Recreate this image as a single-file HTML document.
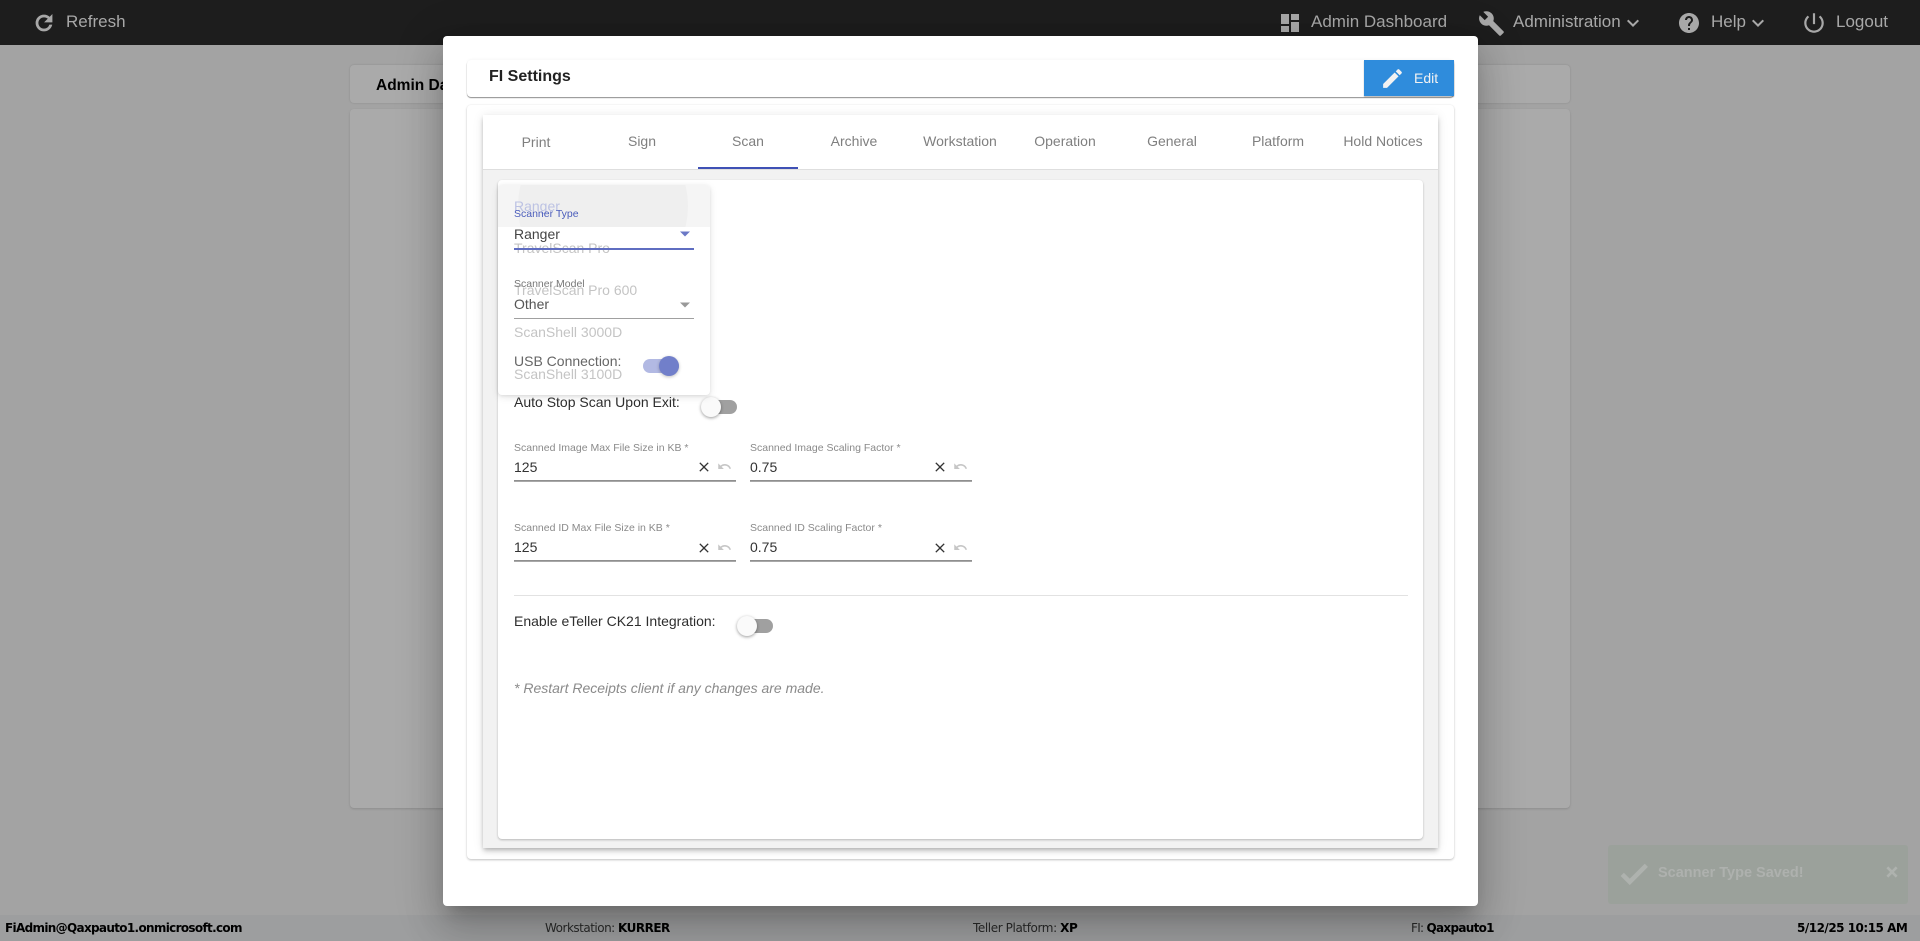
<!DOCTYPE html>
<html><head><meta charset="utf-8"><title>FI Settings</title>
<style>
html,body{margin:0;padding:0;width:1920px;height:941px;overflow:hidden;background:#a3a3a3;font-family:"Liberation Sans",Arial,sans-serif}
.a{position:absolute}
.t{position:absolute;white-space:nowrap;line-height:20px;height:20px}
svg{position:absolute;display:block}
.tab{position:absolute;top:131px;width:106px;text-align:center;font-size:14px;line-height:20px;color:#7f7f7f;white-space:nowrap}
.lbl{font-size:10.5px;color:#8a8a8a}
.val{font-size:14px;color:#333}
.ghost{font-size:14px;color:#c4c4c4}
.ul{position:absolute;height:1px;background:#8f8f8f;border-top:1px solid #8f8f8f;height:0;border-bottom:1px solid #a8a8a8}
.ft{position:absolute;top:918px;font-size:12px;line-height:20px;color:#2a2a2a;white-space:nowrap;font-family:"DejaVu Sans","Liberation Sans",sans-serif}
.ft b{color:#000}
.nav{font-size:17px;color:#a8a8a8}
</style></head><body>

<!-- page behind -->
<div class="a" style="left:0;top:0;width:1920px;height:45px;background:#1d1d1d"></div>
<svg style="left:32px;top:11px" width="24" height="24" viewBox="0 0 24 24" fill="#a8a8a8" stroke="#a8a8a8" stroke-width=".8"><path d="M17.65 6.35C16.2 4.9 14.21 4 12 4c-4.42 0-7.99 3.58-7.99 8s3.57 8 7.99 8c3.73 0 6.84-2.55 7.73-6h-2.08c-.82 2.33-3.04 4-5.65 4-3.31 0-6-2.69-6-6s2.69-6 6-6c1.66 0 3.14.69 4.22 1.78L13 11h7V4l-2.35 2.35z"/></svg>
<div class="t nav" style="left:66px;top:12px">Refresh</div>

<svg style="left:1278px;top:11px" width="24" height="24" viewBox="0 0 24 24" fill="#a8a8a8"><path d="M3 13h8V3H3v10zm0 8h8v-6H3v6zm10 0h8V11h-8v10zm0-18v6h8V3h-8z"/></svg>
<div class="t nav" style="left:1311px;top:12px">Admin Dashboard</div>
<svg style="left:1478px;top:10px" width="27" height="27" viewBox="0 0 24 24" fill="#a8a8a8"><path d="M22.7 19l-9.1-9.1c.9-2.3.4-5-1.5-6.9-2-2-5-2.4-7.4-1.3L9 6 6 9 1.6 4.7C.4 7.1.9 10.1 2.9 12.1c1.9 1.9 4.6 2.4 6.9 1.5l9.1 9.1c.4.4 1 .4 1.4 0l2.3-2.3c.5-.4.5-1.1.1-1.4z"/></svg>
<div class="t nav" style="left:1513px;top:12px">Administration</div>
<svg style="left:1621px;top:11px" width="24" height="24" viewBox="0 0 24 24" fill="#a8a8a8"><path d="M7.41 8.59L12 13.17l4.59-4.58L18 10l-6 6-6-6 1.41-1.41z"/></svg>
<svg style="left:1677px;top:11px" width="24" height="24" viewBox="0 0 24 24" fill="#a8a8a8"><path d="M12 2C6.48 2 2 6.48 2 12s4.48 10 10 10 10-4.48 10-10S17.52 2 12 2zm1 17h-2v-2h2v2zm2.07-7.75l-.9.92C13.45 12.9 13 13.5 13 15h-2v-.5c0-1.1.45-2.1 1.17-2.83l1.24-1.26c.37-.36.59-.86.59-1.41 0-1.1-.9-2-2-2s-2 .9-2 2H8c0-2.21 1.79-4 4-4s4 1.79 4 4c0 .88-.36 1.68-.93 2.25z"/></svg>
<div class="t nav" style="left:1711px;top:12px">Help</div>
<svg style="left:1746px;top:11px" width="24" height="24" viewBox="0 0 24 24" fill="#a8a8a8"><path d="M7.41 8.59L12 13.17l4.59-4.58L18 10l-6 6-6-6 1.41-1.41z"/></svg>
<svg style="left:1801px;top:10px" width="26" height="26" viewBox="0 0 24 24" fill="#a8a8a8"><path d="M13 3h-2v10h2V3zm4.83 2.17l-1.42 1.42C17.99 7.86 19 9.81 19 12c0 3.87-3.13 7-7 7s-7-3.13-7-7c0-2.19 1.01-4.14 2.58-5.42L6.17 5.17C4.23 6.82 3 9.26 3 12c0 4.97 4.03 9 9 9s9-4.03 9-9c0-2.74-1.23-5.18-3.17-6.83z"/></svg>
<div class="t nav" style="left:1836px;top:12px">Logout</div>

<div class="a" style="left:350px;top:65px;width:1220px;height:38px;background:#aaaaaa;border-radius:4px;box-shadow:0 0 1px 1px #9a9a9a"></div>
<div class="t" style="left:376px;top:76px;font-size:15.5px;font-weight:bold;color:#000">Admin Dashboard</div>
<div class="a" style="left:350px;top:109px;width:1220px;height:699px;background:#aaaaaa;border-radius:4px;box-shadow:0 1px 2px #8c8c8c"></div>

<div class="a" style="left:0;top:915px;width:1920px;height:26px;background:#9d9e9f"></div>
<div class="ft" style="left:5px;letter-spacing:-.67px"><b>FiAdmin@Qaxpauto1.onmicrosoft.com</b></div>
<div class="ft" style="left:545px;letter-spacing:-.5px">Workstation: <b>KURRER</b></div>
<div class="ft" style="left:973px;letter-spacing:-.4px">Teller Platform: <b>XP</b></div>
<div class="ft" style="left:1411px;letter-spacing:-.7px">FI: <b>Qaxpauto1</b></div>
<div class="ft" style="left:1797px;letter-spacing:-.5px"><b>5/12/25 10:15 AM</b></div>

<!-- toast -->
<div class="a" style="left:1608px;top:845px;width:300px;height:59px;background:#9ba19b;border-radius:3px"></div>
<svg style="left:1617px;top:857px" width="34" height="34" viewBox="0 0 24 24" fill="#aeb2ae"><path d="M9 16.17L4.83 12l-1.42 1.41L9 19 21 7l-1.41-1.41z" stroke="#aeb2ae" stroke-width="1.2"/></svg>
<div class="t" style="left:1658px;top:863px;font-size:14.5px;font-weight:bold;color:#aeb1ae">Scanner Type Saved!</div>
<svg style="left:1884px;top:864px" width="16" height="16" viewBox="0 0 24 24" fill="#aeb2ae"><path d="M19 6.41L17.59 5 12 10.59 6.41 5 5 6.41 10.59 12 5 17.59 6.41 19 12 13.41 17.59 19 19 17.59 13.41 12z" stroke="#aeb2ae" stroke-width="2"/></svg>

<!-- dialog -->
<div class="a" style="left:443px;top:36px;width:1035px;height:870px;background:#fff;border-radius:4px;box-shadow:0 11px 15px -7px rgba(0,0,0,.2),0 24px 38px 3px rgba(0,0,0,.14),0 9px 46px 8px rgba(0,0,0,.12)"></div>

<div class="a" style="left:467px;top:60px;width:987px;height:37px;background:#fff;border-radius:4px;box-shadow:0 -1px 2px rgba(0,0,0,.03),0 1px 1px rgba(0,0,0,.45)"></div>
<div class="t" style="left:489px;top:67px;font-size:16px;font-weight:bold;color:#222">FI Settings</div>
<div class="a" style="left:1364px;top:60px;width:90px;height:36px;background:#2f8cdc;box-shadow:0 1px 1px rgba(0,0,0,.3)"></div>
<svg style="left:1380px;top:66px" width="25" height="25" viewBox="0 0 24 24" fill="#f2f2f2"><path d="M3 17.25V21h3.75L17.81 9.94l-3.75-3.75L3 17.25zM20.71 7.04c.39-.39.39-1.02 0-1.41l-2.34-2.34c-.39-.39-1.02-.39-1.41 0l-1.83 1.83 3.75 3.75 1.83-1.83z"/></svg>
<div class="t" style="left:1414px;top:68px;font-size:14px;color:#f2f2f2">Edit</div>

<div class="a" style="left:467px;top:105px;width:987px;height:754px;background:#fff;border-radius:4px;box-shadow:0 1px 2px rgba(0,0,0,.25),0 -1px 1px rgba(0,0,0,.02)"></div>

<!-- tabs paper -->
<div class="a" style="left:483px;top:115px;width:955px;height:733px;background:#f2f2f2;box-shadow:0 2px 4px -1px rgba(0,0,0,.2),0 4px 5px rgba(0,0,0,.1),0 1px 10px rgba(0,0,0,.1)"></div>
<div class="a" style="left:483px;top:115px;width:955px;height:54px;background:#fff;border-bottom:1px solid #dedede"></div>
<div class="tab" style="left:483px;top:132px">Print</div>
<div class="tab" style="left:589px">Sign</div>
<div class="tab" style="left:695px">Scan</div>
<div class="tab" style="left:801px">Archive</div>
<div class="tab" style="left:907px">Workstation</div>
<div class="tab" style="left:1012px">Operation</div>
<div class="tab" style="left:1119px">General</div>
<div class="tab" style="left:1225px">Platform</div>
<div class="tab" style="left:1330px">Hold Notices</div>
<div class="a" style="left:698px;top:167px;width:100px;height:2px;background:#3f51b5"></div>

<!-- content card -->
<div class="a" style="left:498px;top:180px;width:925px;height:659px;background:#fff;border-radius:4px;box-shadow:0 1px 2px rgba(0,0,0,.25)"></div>

<div class="t" style="left:514px;top:392px;font-size:14px;color:#2e2e2e">Auto Stop Scan Upon Exit:</div>
<div class="a" style="left:710px;top:400px;width:27px;height:14px;border-radius:7px;background:#a0a0a0"></div>
<div class="a" style="left:701px;top:397px;width:20px;height:20px;border-radius:50%;background:#fafafa;box-shadow:0 1px 3px rgba(0,0,0,.4)"></div>

<div class="t lbl" style="left:514px;top:438px">Scanned Image Max File Size in KB *</div>
<div class="t val" style="left:514px;top:457px">125</div>
<div class="ul" style="left:514px;top:480px;width:222px"></div>
<div class="t lbl" style="left:750px;top:438px">Scanned Image Scaling Factor *</div>
<div class="t val" style="left:750px;top:457px">0.75</div>
<div class="ul" style="left:750px;top:480px;width:222px"></div>

<div class="t lbl" style="left:514px;top:518px">Scanned ID Max File Size in KB *</div>
<div class="t val" style="left:514px;top:537px">125</div>
<div class="ul" style="left:514px;top:560px;width:222px"></div>
<div class="t lbl" style="left:750px;top:518px">Scanned ID Scaling Factor *</div>
<div class="t val" style="left:750px;top:537px">0.75</div>
<div class="ul" style="left:750px;top:560px;width:222px"></div>

<svg style="left:696px;top:459px" width="16" height="16" viewBox="0 0 24 24" fill="#333"><path d="M19 6.41L17.59 5 12 10.59 6.41 5 5 6.41 10.59 12 5 17.59 6.41 19 12 13.41 17.59 19 19 17.59 13.41 12z"/></svg>
<svg style="left:932px;top:459px" width="16" height="16" viewBox="0 0 24 24" fill="#333"><path d="M19 6.41L17.59 5 12 10.59 6.41 5 5 6.41 10.59 12 5 17.59 6.41 19 12 13.41 17.59 19 19 17.59 13.41 12z"/></svg>
<svg style="left:696px;top:540px" width="16" height="16" viewBox="0 0 24 24" fill="#333"><path d="M19 6.41L17.59 5 12 10.59 6.41 5 5 6.41 10.59 12 5 17.59 6.41 19 12 13.41 17.59 19 19 17.59 13.41 12z"/></svg>
<svg style="left:932px;top:540px" width="16" height="16" viewBox="0 0 24 24" fill="#333"><path d="M19 6.41L17.59 5 12 10.59 6.41 5 5 6.41 10.59 12 5 17.59 6.41 19 12 13.41 17.59 19 19 17.59 13.41 12z"/></svg>
<svg style="left:717px;top:459px" width="15" height="15" viewBox="0 0 24 24" fill="#c6c6c6"><path d="M12.5 8c-2.65 0-5.05.99-6.9 2.6L2 7v9h9l-3.62-3.62c1.39-1.16 3.16-1.88 5.12-1.88 3.54 0 6.55 2.31 7.6 5.5l2.37-.78C21.08 11.03 17.15 8 12.5 8z"/></svg>
<svg style="left:953px;top:459px" width="15" height="15" viewBox="0 0 24 24" fill="#c6c6c6"><path d="M12.5 8c-2.65 0-5.05.99-6.9 2.6L2 7v9h9l-3.62-3.62c1.39-1.16 3.16-1.88 5.12-1.88 3.54 0 6.55 2.31 7.6 5.5l2.37-.78C21.08 11.03 17.15 8 12.5 8z"/></svg>
<svg style="left:717px;top:540px" width="15" height="15" viewBox="0 0 24 24" fill="#c6c6c6"><path d="M12.5 8c-2.65 0-5.05.99-6.9 2.6L2 7v9h9l-3.62-3.62c1.39-1.16 3.16-1.88 5.12-1.88 3.54 0 6.55 2.31 7.6 5.5l2.37-.78C21.08 11.03 17.15 8 12.5 8z"/></svg>
<svg style="left:953px;top:540px" width="15" height="15" viewBox="0 0 24 24" fill="#c6c6c6"><path d="M12.5 8c-2.65 0-5.05.99-6.9 2.6L2 7v9h9l-3.62-3.62c1.39-1.16 3.16-1.88 5.12-1.88 3.54 0 6.55 2.31 7.6 5.5l2.37-.78C21.08 11.03 17.15 8 12.5 8z"/></svg>

<div class="a" style="left:514px;top:595px;width:894px;height:1px;background:#e2e2e2"></div>
<div class="t" style="left:514px;top:611px;font-size:14px;color:#2e2e2e">Enable eTeller CK21 Integration:</div>
<div class="a" style="left:746px;top:619px;width:27px;height:14px;border-radius:7px;background:#a0a0a0"></div>
<div class="a" style="left:737px;top:616px;width:20px;height:20px;border-radius:50%;background:#fafafa;box-shadow:0 1px 3px rgba(0,0,0,.4)"></div>
<div class="t" style="left:514px;top:678px;font-size:14px;font-style:italic;color:#8a8a8a">* Restart Receipts client if any changes are made.</div>

<!-- dropdown panel -->
<div class="a" style="left:498px;top:185px;width:212px;height:210px;background:#fff;border-radius:4px;box-shadow:0 2px 8px rgba(0,0,0,.1),0 1px 3px rgba(0,0,0,.08)"></div>
<div class="a" style="left:498px;top:185px;width:212px;height:42px;background:#f5f5f5;border-radius:4px 4px 0 0;overflow:hidden"><div class="a" style="left:20px;top:-64px;width:170px;height:170px;background:#efefef;border-radius:50%"></div></div>

<div class="t ghost" style="left:514px;top:196px;color:#bcc2e3">Ranger</div>
<div class="t" style="left:514px;top:204px;font-size:10.5px;color:#4a5cbb">Scanner Type</div>
<div class="t val" style="left:514px;top:224px;color:#444">Ranger</div>
<div class="t ghost" style="left:514px;top:238px">TravelScan Pro</div>
<div class="a" style="left:514px;top:248px;width:180px;height:2px;background:#5f6dc1"></div>
<svg style="left:680px;top:231px" width="10" height="6" viewBox="0 0 10 5"><path d="M0 0h10L5 5z" fill="#6b78c6"/></svg>

<div class="t ghost" style="left:514px;top:280px">TravelScan Pro 600</div>
<div class="t" style="left:514px;top:274px;font-size:10.5px;color:#777">Scanner Model</div>
<div class="t val" style="left:514px;top:294px;color:#555">Other</div>
<div class="a" style="left:514px;top:318px;width:180px;height:1px;background:#a0a0a0"></div>
<svg style="left:680px;top:302px" width="10" height="6" viewBox="0 0 10 5"><path d="M0 0h10L5 5z" fill="#999"/></svg>

<div class="t ghost" style="left:514px;top:322px">ScanShell 3000D</div>
<div class="t val" style="left:514px;top:351px;color:#666">USB Connection:</div>
<div class="t ghost" style="left:514px;top:364px">ScanShell 3100D</div>
<div class="a" style="left:643px;top:359px;width:36px;height:14px;border-radius:7px;background:#b2b9e3"></div>
<div class="a" style="left:659px;top:356px;width:20px;height:20px;border-radius:50%;background:#717fca;box-shadow:0 1px 3px rgba(0,0,0,.25)"></div>

</body></html>
